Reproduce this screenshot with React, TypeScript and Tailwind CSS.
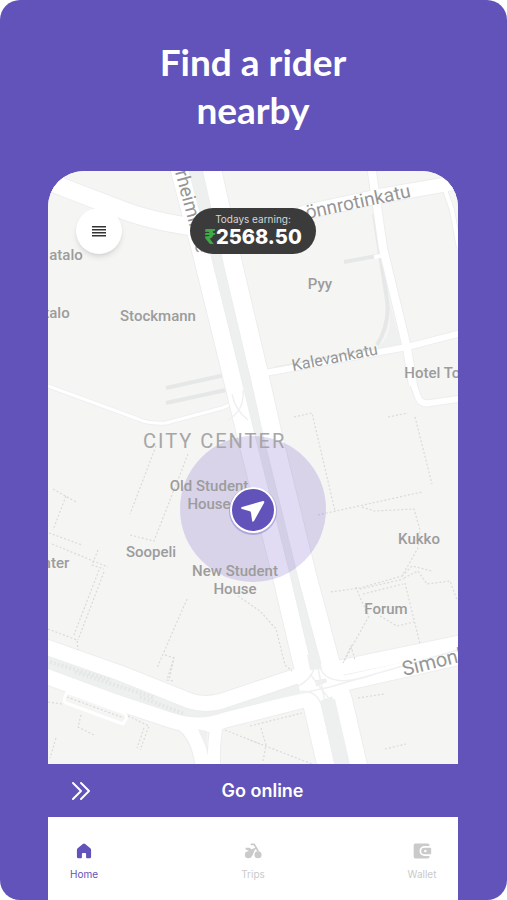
import React from 'react';

type Label = { text: string; x: number; y: number };

const places: Label[] = [
  { text: 'atalo', x: 66, y: 260 },
  { text: 'talo', x: 57, y: 318 },
  { text: 'Stockmann', x: 158, y: 321 },
  { text: 'Pyy', x: 320, y: 289 },
  { text: 'Hotel Torni', x: 441, y: 378 },
  { text: 'Old Student', x: 209, y: 491 },
  { text: 'House', x: 209, y: 509 },
  { text: 'Soopeli', x: 151, y: 557 },
  { text: 'New Student', x: 235, y: 576 },
  { text: 'House', x: 235, y: 594 },
  { text: 'Center', x: 47, y: 568 },
  { text: 'Kukko', x: 419, y: 544 },
  { text: 'Forum', x: 386, y: 614 },
];

// a grey casing is drawn first, then the white surface on top
const roads = [
  { d: 'M40 178 L70 190 L125 211 Q155 222 200 228', w: 17 },
  { d: 'M270 224 L310 211 L380 196 L465 181', w: 14 },
  { d: 'M371 165 L383 248 L407 348 L413 385', w: 8 },
  { d: 'M412 380 L418 397 Q421 405 430 403 L465 398', w: 6 },
  { d: 'M265 373 L407 347 L465 332', w: 6 },
  { d: 'M445 190 L452 210 L459 248', w: 4 },
  { d: 'M178 165 L201 252 L232 378 L246 436 L281 575 L301 660 L312 705 L327 770', w: 17 },
  { d: 'M211 165 L234 268 L260 378 L273 436 L307 575 L333 672 L343 700 L359 770', w: 18 },
  { d: 'M40 645 L120 673 L190 701 Q205 706 222 701 L300 675 L325 671 L465 642', w: 15 },
  { d: 'M40 674 L110 700 L170 720 Q200 730 225 720 L300 701 L345 683 L465 656', w: 15 },
  { d: 'M180 722 Q200 735 203 770', w: 14 },
  { d: 'M220 718 Q213 730 214 770', w: 12 },
];

const paths = [
  'M53 489 L76 502 M66 496 L53 530 M49 533 L82 545 M52 544 L108 567',
  'M156 446 L130 514 M188 454 L154 541 L130 535',
  'M98 550 L92 565 L104 569 M99 570 L74 635 M104 572 L78 640',
  'M48 629 L77 640 L78 650',
  'M187 599 L157 668 M174 657 L167 680 L174 681 M165 655 L174 658 L169 680',
  'M294 417 L312 413 L335 511 M318 515 L422 492 M388 417 L408 413 M415 417 L432 484',
  'M362 507 L374 511 L414 509 L420 530 L418 548 L402 576 L360 588 L330 592',
  'M360 589 L404 579 M363 594 L403 584 M402 576 L412 566 L432 571',
  'M404 578 L418 571 L427 584 L450 581 L457 600 M405 583 L420 644',
  'M356 587 L361 600 L369 616 L343 663 L351 646 L355 660 M380 616 L397 626 L414 622',
  'M238 596 L260 611 L276 629 L285 665 L292 671',
  'M250 726 L302 713 M261 728 L266 745 L263 761 M250 740 L312 764 M225 730 L260 744',
  'M358 698 L384 694 M385 749 L406 744',
  'M48 702 L62 704 M81 715 L78 727 L94 735 M56 738 L50 758',
  'M128 716 L149 726 L140 750 M144 728 L137 748 M67 697 L124 718',
];

function CityMap() {
  return (
    <svg
      viewBox="48 171 410 593"
      className="block h-auto w-full bg-[#f5f5f4] [font-family:Roboto,'Noto_Sans',sans-serif]"
      role="img"
      aria-label="Map"
    >
      {/* central reservations and tram tracks */}
      <g fill="none" stroke="#eef0ef" strokeLinejoin="round">
        <path d="M194 165 L217 260 L246 378 L260 436 L294 575 L316 670 L344 770" strokeWidth="20" />
        <path d="M40 658 L110 681 L180 709 L212 714 L300 689" strokeWidth="18" />
      </g>
      <path d="M389 300 L402 348 L378 348 Q390 337 390 322 Z" fill="#eff1f0" />
      <g fill="none" stroke="#e5e8e7">
        <path d="M166 388 L225 375 M166 403 L226 390 M274 369 L370 350" strokeWidth="4" />
        <path d="M344 262 L382 255 M374 214 L387 300 Q390 324 377 345" strokeWidth="4" />
      </g>

      <path d="M48 386 L138 419 Q148 424 166 423 L222 408 Q235 404 241 390" fill="none" stroke="#efefef" strokeWidth="5" />
      <path d="M48 386 L138 419 Q148 424 166 423 L222 408 Q235 404 241 390" fill="none" stroke="#fff" strokeWidth="3" />

      <g fill="none" stroke="#eceeed" strokeLinejoin="round">
        {roads.map((r) => (
          <path key={r.d} d={r.d} strokeWidth={r.w + 2} />
        ))}
      </g>
      <g fill="none" stroke="#fff" strokeLinejoin="round">
        {roads.map((r) => (
          <path key={r.d} d={r.d} strokeWidth={r.w} />
        ))}
        <path d="M67 692 L124 713 Q127 715 126 719 L123 724 L66 703 Q63 702 65 697 Z" strokeWidth="3" />
        <path d="M374 257 L385 255" strokeWidth="4" />
      </g>

      {/* junction markings */}
      <g fill="none" stroke="#eff1f0" strokeWidth="1.5">
        <path d="M250 702 Q310 690 314 668 M250 704 L330 687 L458 650 M320 668 Q330 690 375 674" />
        <path d="M318 668 L325 702 M296 692 Q315 688 321 704 M310 674 L330 700 M228 420 Q245 410 243 390 M232 394 Q235 410 248 420" />
      </g>
      <path d="M310 670 L322 669 L318 652 L307 655 Z M321 701 L335 699 L350 764 L334 764 Z" fill="#eef0ef" />
      <path d="M50 662 L110 680 M75 672 L155 698 M140 697 L185 714" stroke="#e5e7e7" strokeWidth="4" strokeDasharray="2 2" fill="none" />
      <path d="M198 729 L207 731 L206 747 Z" fill="#eff1f0" />

      <g fill="none" stroke="#dadada" strokeWidth="1.2" strokeDasharray="2 2">
        {paths.map((d) => (
          <path key={d} d={d} />
        ))}
      </g>

      {/* current position */}
      <circle cx="253" cy="509" r="73" fill="#694bc3" fillOpacity="0.2" />

      <g fill="#9c9c9c" textAnchor="middle" className="text-[15px] font-medium">
        {places.map((p) => (
          <text key={`${p.text}-${p.y}`} x={p.x} y={p.y}>
            {p.text}
          </text>
        ))}
      </g>
      <text x="143" y="448" fill="#a6a6a6" className="text-[20px] tracking-widest">
        CITY CENTER
      </text>
      <g fill="#969696">
        <text transform="translate(293 371) rotate(-11)" className="text-[16px]">Kalevankatu</text>
        <text transform="translate(307 219) rotate(-12)" className="text-[19px]">önnrotinkatu</text>
        <text transform="translate(404 676) rotate(-14)" className="text-[20px]">Simonkatu</text>
        <text transform="translate(175 172) rotate(75)" className="text-[19px]">rheimintie</text>
      </g>

      <circle cx="253" cy="511" r="24" fill="#6153ba" fillOpacity="0.35" />
      <circle cx="253" cy="510" r="22" fill="#6153ba" stroke="#fff" strokeWidth="2" />
      <path
        d="M242 507 L263 501 Q265 501 264 503 L254 521 Q252 523 252 520 L251 513 Q251 511 249 511 L242 509 Q240 508 242 507 Z"
        fill="#fff"
      />
    </svg>
  );
}

function HomeIcon() {
  return (
    <svg viewBox="0 0 24 24" className="size-5" fill="currentColor" aria-hidden="true">
      <path d="M10.6 3.5 4.4 8.6A2.6 2.6 0 0 0 3.5 10.6V19a1.8 1.8 0 0 0 1.8 1.8h3.2a1 1 0 0 0 1-1V15.500a1 1 0 0 1 1-1h3a1 1 0 0 1 1 1v4.300a1 1 0 0 0 1 1h3.200A1.800 1.800 0 0 0 20.500 19v-8.400a2.600 2.600 0 0 0-.9-2L13.400 3.500a2.200 2.200 0 0 0-2.800 0Z" />
    </svg>
  );
}

function TripsIcon() {
  return (
    <svg viewBox="0 0 24 24" className="size-5" aria-hidden="true">
      <g fill="currentColor">
        <circle cx="6.500" cy="16.500" r="4.300" />
        <circle cx="18" cy="16.500" r="4.300" />
        <path d="M3 8h5l2 2 3-1 1 2-3 7H8l-1-6-4-2Z" />
      </g>
      <path d="M10 4h3.500L18 12M16 8l-4 3" fill="none" stroke="currentColor" strokeWidth="2" strokeLinecap="round" strokeLinejoin="round" />
    </svg>
  );
}

function WalletIcon() {
  return (
    <svg viewBox="0 0 24 24" className="size-5" fill="currentColor" aria-hidden="true">
      <path d="M4 3h15a2 2 0 0 1 2 2v1h-6a6 6 0 0 0 0 12h6v1a2 2 0 0 1-2 2H4a2 2 0 0 1-2-2V5a2 2 0 0 1 2-2Z" />
      <path fillRule="evenodd" d="M15 8h7a1 1 0 0 1 1 1v6a1 1 0 0 1-1 1h-7a4 4 0 0 1 0-8Zm1 2.500a1.500 1.500 0 1 0 0 3 1.500 1.500 0 0 0 0-3Z" />
    </svg>
  );
}

const tabs = [
  { name: 'Home', icon: <HomeIcon />, color: 'text-[#6153ba]' },
  { name: 'Trips', icon: <TripsIcon />, color: 'text-[#cacaca]' },
  { name: 'Wallet', icon: <WalletIcon />, color: 'text-[#cacaca]' },
];

const App: React.FC = () => {
  return (
    <div className="bg-white font-['Inter',sans-serif]">
      <div className="flex min-h-screen flex-col rounded-[20px] bg-[#6153ba] pt-[38px] pr-[49px] pl-12">
        <h1 className="mb-[37px] text-center font-['Lato',sans-serif] text-[37px] leading-12 font-bold text-white">
          Find a rider
          <br />
          nearby
        </h1>

        <main className="flex grow flex-col overflow-hidden rounded-t-[36px] bg-white">
          <section className="relative">
            <CityMap />

            {/* Map controls */}
            <button
              type="button"
              aria-label="Menu"
              className="absolute top-[37px] left-7 flex size-[46px] items-center justify-center rounded-full bg-white text-[#333] shadow-md"
            >
              <svg viewBox="0 0 16 12" className="h-3 w-4" fill="currentColor" aria-hidden="true">
                <path d="M1 1h14v1.500H1zM1 4h14v1.500H1zM1 7h14v1.500H1zM1 10h14v1.500H1z" />
              </svg>
            </button>
            <div className="absolute top-[37px] left-1/2 flex h-[46px] w-[126px] -translate-x-1/2 flex-col items-center justify-center rounded-full bg-[#3b3b3b] text-white">
              <span className="text-[10px] leading-3 text-[#d6d6d6]">Todays earning:</span>
              <span className="text-xl leading-6 font-extrabold">
                <span className="text-[#3cab46]">₹</span>2568.50
              </span>
            </div>
          </section>

          <button type="button" className="flex h-[53px] items-center bg-[#6153ba] pr-1 pl-[23px] text-white">
            <svg viewBox="0 0 20 20" className="size-5" fill="none" stroke="currentColor" strokeWidth="2" strokeLinecap="round" strokeLinejoin="round" aria-hidden="true">
              <path d="M2 2l8 8-8 8M10 2l8 8-8 8" />
            </svg>
            <span className="grow pr-5 text-center text-lg font-semibold">Go online</span>
          </button>

          {/* Bottom tabs */}
          <nav className="flex h-[83px] items-start justify-between px-4 pt-6">
            {tabs.map((tab) => (
              <a key={tab.name} href="#" className={`flex w-10 flex-col items-center gap-1.5 text-[10px] ${tab.color}`}>
                {tab.icon}
                <span>{tab.name}</span>
              </a>
            ))}
          </nav>
        </main>
      </div>
    </div>
  );
};

export default App;
